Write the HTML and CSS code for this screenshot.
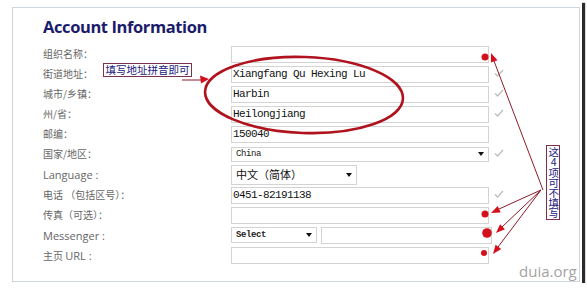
FILE: index.html
```html
<!DOCTYPE html>
<html>
<head>
<meta charset="utf-8">
<link rel="stylesheet" href="styles.css">
</head>
<body>
<div class="shot">
  <div class="panel">
    <h1>Account Information</h1>
    <div class="form">
      <div class="row"><div class="label">组织名称：</div><div class="input"></div></div>
      <div class="row"><div class="label">街道地址：</div><div class="input">Xiangfang Qu Hexing Lu</div><svg class="check" viewBox="0 0 10 8"><path d="M1 4.5 L3.6 7 L9 1"/></svg></div>
      <div class="row"><div class="label">城市/乡镇：</div><div class="input">Harbin</div><svg class="check" viewBox="0 0 10 8"><path d="M1 4.5 L3.6 7 L9 1"/></svg></div>
      <div class="row"><div class="label">州/省：</div><div class="input">Heilongjiang</div><svg class="check" viewBox="0 0 10 8"><path d="M1 4.5 L3.6 7 L9 1"/></svg></div>
      <div class="row"><div class="label">邮编：</div><div class="input">150040</div></div>
      <div class="row"><div class="label">国家/地区：</div><div class="select country"><span>China</span><i class="arrow"></i></div><svg class="check" viewBox="0 0 10 8"><path d="M1 4.5 L3.6 7 L9 1"/></svg></div>
      <div class="row tall"><div class="label en">Language :</div><div class="select lang"><span>中文（简体）</span><i class="arrow"></i></div></div>
      <div class="row"><div class="label">电话 （包括区号）：</div><div class="input">0451-82191138</div><svg class="check" viewBox="0 0 10 8"><path d="M1 4.5 L3.6 7 L9 1"/></svg></div>
      <div class="row"><div class="label">传真（可选）：</div><div class="input"></div></div>
      <div class="row"><div class="label en">Messenger :</div><div class="select msg"><span>Select</span><i class="arrow"></i></div><div class="input msg-input"></div></div>
      <div class="row"><div class="label">主页 <span class="en">URL :</span></div><div class="input"></div></div>
    </div>
  </div>
  <svg class="overlay" width="587" height="288" viewBox="0 0 587 288">
    <ellipse cx="304" cy="95" rx="99" ry="38" transform="rotate(2 304 95)" fill="none" stroke="#b0121e" stroke-width="2.6"/>
    <g stroke="#8e1b2a" stroke-width="1" fill="none">
      <line x1="182" y1="80" x2="201" y2="80"/>
      <line x1="543" y1="190" x2="494" y2="61"/>
      <line x1="541" y1="190" x2="499" y2="209"/>
      <line x1="541" y1="190" x2="502" y2="227"/>
      <line x1="541" y1="190" x2="498" y2="247"/>
    </g>
    <g fill="#d4101c">
      <polygon points="209,79 200,75.5 201,83.5"/>
      <polygon points="491,53 497.5,60.2 490.9,62.6"/>
      <polygon points="491,213 500.7,212.4 497.7,206"/>
      <polygon points="496,233 504.9,229.3 500.1,224.3"/>
      <polygon points="493,254 501.2,248.9 495.6,244.7"/>
      <circle cx="485" cy="57" r="3.5"/>
      <circle cx="485" cy="214" r="3.5"/>
      <circle cx="487" cy="233" r="4.8"/>
      <circle cx="484" cy="253" r="3"/>
    </g>
  </svg>
  <div class="note note-h">填写地址拼音即可</div>
  <div class="note note-v">这4项可不填写</div>
  <div class="mark">duia.org</div>
</div>
</body>
</html>
```
FILE: styles.css
```css
html, body {
  margin: 0;
  padding: 0;
  background: #fff;
}

.shot {
  position: relative;
  width: 582px;
  height: 283px;
  box-sizing: border-box;
  padding: 7px 0 0 12px;
  background: #fff;
  box-shadow: 3px 3px 1px #2a2a2a;
}

.panel {
  width: 568px;
  height: 275px;
  box-sizing: border-box;
  border: 1px solid #cdd6df;
  padding: 8px 0 0 30px;
}

h1 {
  margin: 0;
  font: bold 16.5px/22px "Open Sans", sans-serif;
  letter-spacing: -0.4px;
  color: #1b1b6b;
}

.form {
  margin-top: 6px;
  display: flex;
  flex-direction: column;
}

.row {
  display: flex;
  align-items: center;
  height: 20px;
}

.row.tall {
  height: 21px;
}

.label {
  width: 188px;
  flex: none;
  font: 10px/1 "Noto Sans CJK SC", sans-serif;
  color: #666;
}

.en {
  font: 11px/1 "Open Sans", sans-serif;
  color: #666;
}

.input {
  box-sizing: border-box;
  width: 258px;
  height: 17px;
  flex: none;
  border: 1px solid #d3d3d3;
  display: flex;
  align-items: center;
  padding-left: 1px;
  font: 11px/1 "Liberation Mono", monospace;
  letter-spacing: -0.6px;
  color: #111;
  background: #fff;
}

.check {
  width: 10px;
  height: 8px;
  margin-left: 5px;
  margin-top: -3px;
  fill: none;
  stroke: #bdbdbd;
  stroke-width: 1.3;
}

.select {
  box-sizing: border-box;
  flex: none;
  display: flex;
  align-items: center;
  border: 1px solid #d3d3d3;
  background: #fff;
  padding: 0 4px 0 4px;
  color: #222;
}

.select span {
  flex: 1;
}

.arrow {
  width: 0;
  height: 0;
  border-left: 3px solid transparent;
  border-right: 3px solid transparent;
  border-top: 4px solid #111;
}

.country {
  width: 258px;
  height: 15px;
  font: 9px/1 "Liberation Mono", monospace;
  letter-spacing: -0.4px;
}

.lang {
  width: 126px;
  height: 20px;
  font: 11px/1 "Noto Sans CJK SC", sans-serif;
  color: #111;
  padding-left: 4px;
}

.msg {
  width: 86px;
  height: 16px;
  font: bold 9px/1 "Liberation Mono", monospace;
  letter-spacing: -0.4px;
}

.msg-input {
  width: 171px;
  margin-left: 4px;
}

.overlay {
  position: absolute;
  left: 0;
  top: 0;
  pointer-events: none;
}

.note {
  position: absolute;
  box-sizing: border-box;
  border: 1px solid #7a3050;
  background: #fff;
  color: #1a1a80;
  font: 10.5px/1 "Noto Sans CJK SC", sans-serif;
}

.note-h {
  left: 103px;
  top: 63px;
  width: 89px;
  height: 14px;
  display: flex;
  align-items: center;
  justify-content: center;
}

.note-v {
  left: 546px;
  top: 145px;
  width: 14px;
  height: 75px;
  writing-mode: vertical-rl;
  text-orientation: upright;
  display: flex;
  align-items: center;
  justify-content: center;
  letter-spacing: -0.3px;
}

.mark {
  position: absolute;
  left: 519px;
  top: 261px;
  font: 15px/20px "Open Sans", sans-serif;
  color: #a3a3a3;
}
```
